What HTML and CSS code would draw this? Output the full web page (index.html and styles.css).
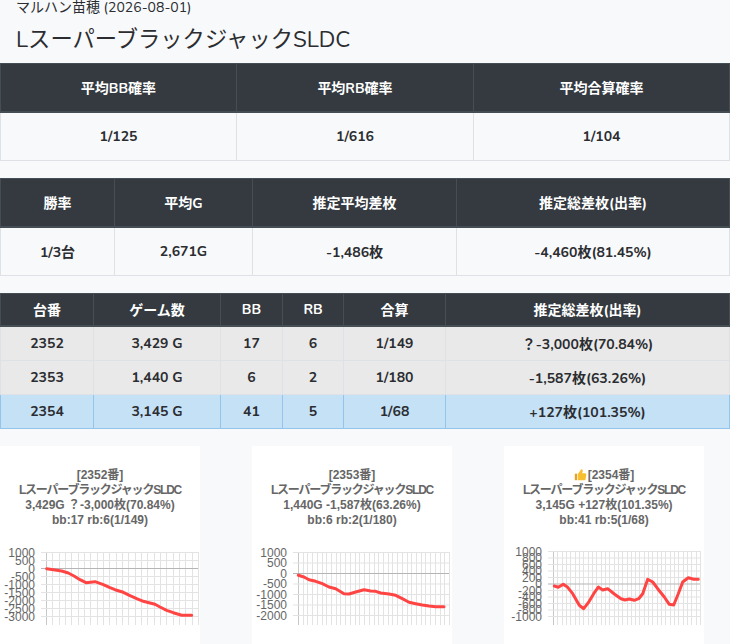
FILE: index.html
```html
<!DOCTYPE html>
<html lang="ja">
<head>
<meta charset="utf-8">
<title>Lスーパーブラックジャック SLDC</title>
<link rel="stylesheet" href="styles.css">
</head>
<body>
<div class="head">
  <div class="sub">マルハン苗穂 (2026-08-01)</div>
  <h1 class="title">LスーパーブラックジャックSLDC</h1>
</div>

<table class="tbl big">
  <colgroup><col style="width:236px"><col style="width:237px"><col></colgroup>
  <thead><tr><th>平均BB確率</th><th>平均RB確率</th><th>平均合算確率</th></tr></thead>
  <tbody><tr><td>1/125</td><td>1/616</td><td>1/104</td></tr></tbody>
</table>

<table class="tbl big">
  <colgroup><col style="width:114px"><col style="width:138px"><col style="width:204px"><col></colgroup>
  <thead><tr><th>勝率</th><th>平均G</th><th>推定平均差枚</th><th>推定総差枚(出率)</th></tr></thead>
  <tbody><tr><td>1/3台</td><td>2,671G</td><td>-1,486枚</td><td>-4,460枚(81.45%)</td></tr></tbody>
</table>

<table class="tbl sm">
  <colgroup><col style="width:93px"><col style="width:127px"><col style="width:62px"><col style="width:61px"><col style="width:102px"><col></colgroup>
  <thead><tr><th>台番</th><th>ゲーム数</th><th>BB</th><th>RB</th><th>合算</th><th>推定総差枚(出率)</th></tr></thead>
  <tbody>
    <tr class="gray"><td>2352</td><td>3,429 G</td><td>17</td><td>6</td><td>1/149</td><td>？-3,000枚(70.84%)</td></tr>
    <tr class="gray"><td>2353</td><td>1,440 G</td><td>6</td><td>2</td><td>1/180</td><td>-1,587枚(63.26%)</td></tr>
    <tr class="blue"><td>2354</td><td>3,145 G</td><td>41</td><td>5</td><td>1/68</td><td>+127枚(101.35%)</td></tr>
  </tbody>
</table>

<div class="charts">
  <div class="card">
    <div class="ctitle">
      <div>[2352番]</div>
      <div class="jp">LスーパーブラックジャックSLDC</div>
      <div>3,429G ？-3,000枚(70.84%)</div>
      <div>bb:17 rb:6(1/149)</div>
    </div>
    <svg class="plot" width="200" height="110" viewBox="0 0 200 110">
      <g class="vgrid" id="vg1"></g>
      <g stroke="#e3e3e3" stroke-width="1">
        <line x1="41" y1="22.5" x2="198" y2="22.5"/>
        <line x1="41" y1="30.5" x2="198" y2="30.5"/>
        <line x1="41" y1="46.5" x2="198" y2="46.5"/>
        <line x1="41" y1="54.5" x2="198" y2="54.5"/>
        <line x1="41" y1="62.5" x2="198" y2="62.5"/>
        <line x1="41" y1="70.5" x2="198" y2="70.5"/>
        <line x1="41" y1="78.5" x2="198" y2="78.5"/>
        <line x1="41" y1="86.5" x2="198" y2="86.5"/>
      </g>
      <line x1="41" y1="38.5" x2="198" y2="38.5" stroke="#b5b5b5"/>
      <g class="ylab" text-anchor="end">
        <text x="35" y="26.5">1000</text>
        <text x="35" y="34.5">500</text>
        <text x="35" y="42.5">0</text>
        <text x="35" y="50.5">-500</text>
        <text x="35" y="58.5">-1000</text>
        <text x="35" y="66.5">-1500</text>
        <text x="35" y="74.5">-2000</text>
        <text x="35" y="82.5">-2500</text>
        <text x="35" y="90.5">-3000</text>
      </g>
      <polyline class="line" points="46.7,38.7 53.3,39.7 61.7,41 68.3,43 74,46 80,49.7 86,52.7 95,51.7 103.3,54.7 110,57.7 115,59.7 123.3,62.3 130,65.7 136.7,68.7 143.3,71.3 150,73 155,74.3 160,77 166.7,80.3 173.3,82.7 181.7,85.3 186.7,85.3 191.7,85.3"/>
    </svg>
  </div>

  <div class="card">
    <div class="ctitle">
      <div>[2353番]</div>
      <div class="jp">LスーパーブラックジャックSLDC</div>
      <div>1,440G -1,587枚(63.26%)</div>
      <div>bb:6 rb:2(1/180)</div>
    </div>
    <svg class="plot" width="200" height="110" viewBox="0 0 200 110">
      <g class="vgrid" id="vg2"></g>
      <g stroke="#e3e3e3" stroke-width="1">
        <line x1="41" y1="22.5" x2="197" y2="22.5"/>
        <line x1="41" y1="33" x2="197" y2="33"/>
        <line x1="41" y1="54" x2="197" y2="54"/>
        <line x1="41" y1="64.5" x2="197" y2="64.5"/>
        <line x1="41" y1="75" x2="197" y2="75"/>
        <line x1="41" y1="85.5" x2="197" y2="85.5"/>
      </g>
      <line x1="41" y1="43.5" x2="197" y2="43.5" stroke="#b5b5b5"/>
      <g class="ylab" text-anchor="end">
        <text x="35" y="26.5">1000</text>
        <text x="35" y="37">500</text>
        <text x="35" y="47.5">0</text>
        <text x="35" y="58">-500</text>
        <text x="35" y="68.5">-1000</text>
        <text x="35" y="79">-1500</text>
        <text x="35" y="89.5">-2000</text>
      </g>
      <polyline class="line" points="46.3,45.3 52,47 57,49.7 63.7,51.3 70.3,53.7 77,57 83.7,58.7 92,63.7 97,64 103.7,62 112,59.7 118.7,61 123.7,61.3 128.7,63 137,64 143.7,65.3 150.3,68.7 157,72.3 163.7,73.7 170.3,75 177,76 183.7,76.7 192,76.7"/>
    </svg>
  </div>

  <div class="card">
    <div class="ctitle">
      <div><svg class="thumb" width="13" height="13" viewBox="0 0 16 16"><path d="M1 7h3v8H1z" fill="#e8a21c"/><path d="M5 7.2 8.2 2.4c.4-.7 1.3-1 2-.6.6.4.8 1.1.6 1.8L10 6.4h3.6c1 0 1.8.9 1.6 1.9l-1 5.4c-.2.8-.9 1.3-1.7 1.3H5z" fill="#f7bf2f"/></svg>[2354番]</div>
      <div class="jp">LスーパーブラックジャックSLDC</div>
      <div>3,145G +127枚(101.35%)</div>
      <div>bb:41 rb:5(1/68)</div>
    </div>
    <svg class="plot" width="200" height="110" viewBox="0 0 200 110">
      <g class="vgrid" id="vg3"></g>
      <g stroke="#e3e3e3" stroke-width="1">
        <line x1="44" y1="21.5" x2="196" y2="21.5"/>
        <line x1="44" y1="28" x2="196" y2="28"/>
        <line x1="44" y1="34.5" x2="196" y2="34.5"/>
        <line x1="44" y1="41" x2="196" y2="41"/>
        <line x1="44" y1="47.5" x2="196" y2="47.5"/>
        <line x1="44" y1="60.5" x2="196" y2="60.5"/>
        <line x1="44" y1="67" x2="196" y2="67"/>
        <line x1="44" y1="73.5" x2="196" y2="73.5"/>
        <line x1="44" y1="80" x2="196" y2="80"/>
        <line x1="44" y1="86.5" x2="196" y2="86.5"/>
      </g>
      <line x1="44" y1="54" x2="196" y2="54" stroke="#b5b5b5"/>
      <g class="ylab" text-anchor="end">
        <text x="38" y="25.5">1000</text>
        <text x="38" y="32">800</text>
        <text x="38" y="38.5">600</text>
        <text x="38" y="45">400</text>
        <text x="38" y="51.5">200</text>
        <text x="38" y="58">0</text>
        <text x="38" y="64.5">-200</text>
        <text x="38" y="71">-400</text>
        <text x="38" y="77.5">-600</text>
        <text x="38" y="84">-800</text>
        <text x="38" y="90.5">-1000</text>
      </g>
      <polyline class="line" points="50.3,56 54.3,57.3 59.3,54.3 63.7,57.3 68.7,63.7 75.3,75.3 79.7,78.7 84.3,72.7 89.7,63.7 94.3,57 98.7,60 103.7,58.7 110.3,64 117,68.7 121,70 125.3,69 130.3,70.3 134.7,68.7 138.7,63.7 143.7,49.3 148.7,52 153.7,58.7 160.3,67 165.3,74.3 169.7,75 174.3,63.7 178.7,52 184.3,47.7 189.7,49.3 194.3,49.3"/>
    </svg>
  </div>
</div>
<script>
(function(){
  function grid(id, x0, x1, n, y0, y1){
    var g=document.getElementById(id), ns="http://www.w3.org/2000/svg";
    for(var i=0;i<=n;i++){
      var x=Math.round(x0+(x1-x0)*i/n)+0.5;
      var l=document.createElementNS(ns,"line");
      l.setAttribute("x1",x);l.setAttribute("x2",x);
      l.setAttribute("y1",y0);l.setAttribute("y2",y1);
      l.setAttribute("stroke", i===0 ? "#c8c8c8" : "#e3e3e3");
      g.appendChild(l);
    }
  }
  grid("vg1",46,198,24,22,95);
  grid("vg2",46,197,32,22,95);
  grid("vg3",49,196,34,21,95);
})();
</script>
</body>
</html>
```

FILE: styles.css
```css
html, body {
  margin: 0;
  padding: 0;
}
body {
  background: #f8f9fb;
  font-family: "Nunito", "Noto Sans", "Noto Sans CJK JP", sans-serif;
  color: #2b2d31;
  width: 730px;
  overflow: hidden;
}
.head {
  padding: 0 16px;
}
.sub {
  font-size: 14px;
  line-height: 16px;
  color: #2b2d31;
}
.title {
  margin: 7px 0 6px;
  font-size: 22.3px;
  line-height: 34px;
  font-weight: 400;
  color: #2b2d31;
}
.tbl {
  width: 730px;
  border-collapse: collapse;
  table-layout: fixed;
  margin-bottom: 17px;
  font-size: 14px;
}
.tbl th, .tbl td {
  text-align: center;
  font-weight: 700;
  white-space: nowrap;
  overflow: hidden;
}
.tbl th {
  background: #343a40;
  color: #fff;
  border: 1px solid #454d55;
  border-bottom-width: 2px;
}
.tbl td {
  border: 1px solid #dee2e6;
  background: #f8f9fb;
}
.big th {
  height: 47px;
  padding: 0 8px;
}
.big td {
  height: 47px;
  padding: 0 8px;
}
.sm th {
  height: 31px;
  padding: 0 6px;
}
.sm td {
  height: 33px;
  padding: 0 6px;
}
.sm tr.gray td {
  background: #e9e9e9;
}
.sm tr.blue td {
  background: #c5e1f6;
  border-color: #94c4ec;
}
.charts {
  display: flex;
  gap: 52px;
}
.card {
  width: 200px;
  height: 240px;
  background: #fff;
  flex: none;
}
.ctitle {
  padding-top: 22px;
  height: 62px;
  font-family: "Liberation Sans", "Noto Sans CJK JP", sans-serif;
  font-size: 12px;
  line-height: 15px;
  font-weight: 700;
  color: #666;
  text-align: center;
}
.ctitle .jp {
  letter-spacing: -1.2px;
}
.thumb {
  vertical-align: -2px;
  margin-right: 1px;
}
.plot {
  display: block;
}
.ylab {
  font-family: "Liberation Sans", sans-serif;
  font-size: 12px;
  fill: #666;
}
.line {
  fill: none;
  stroke: #ff4444;
  stroke-width: 3;
  stroke-linejoin: round;
  stroke-linecap: round;
}
```
